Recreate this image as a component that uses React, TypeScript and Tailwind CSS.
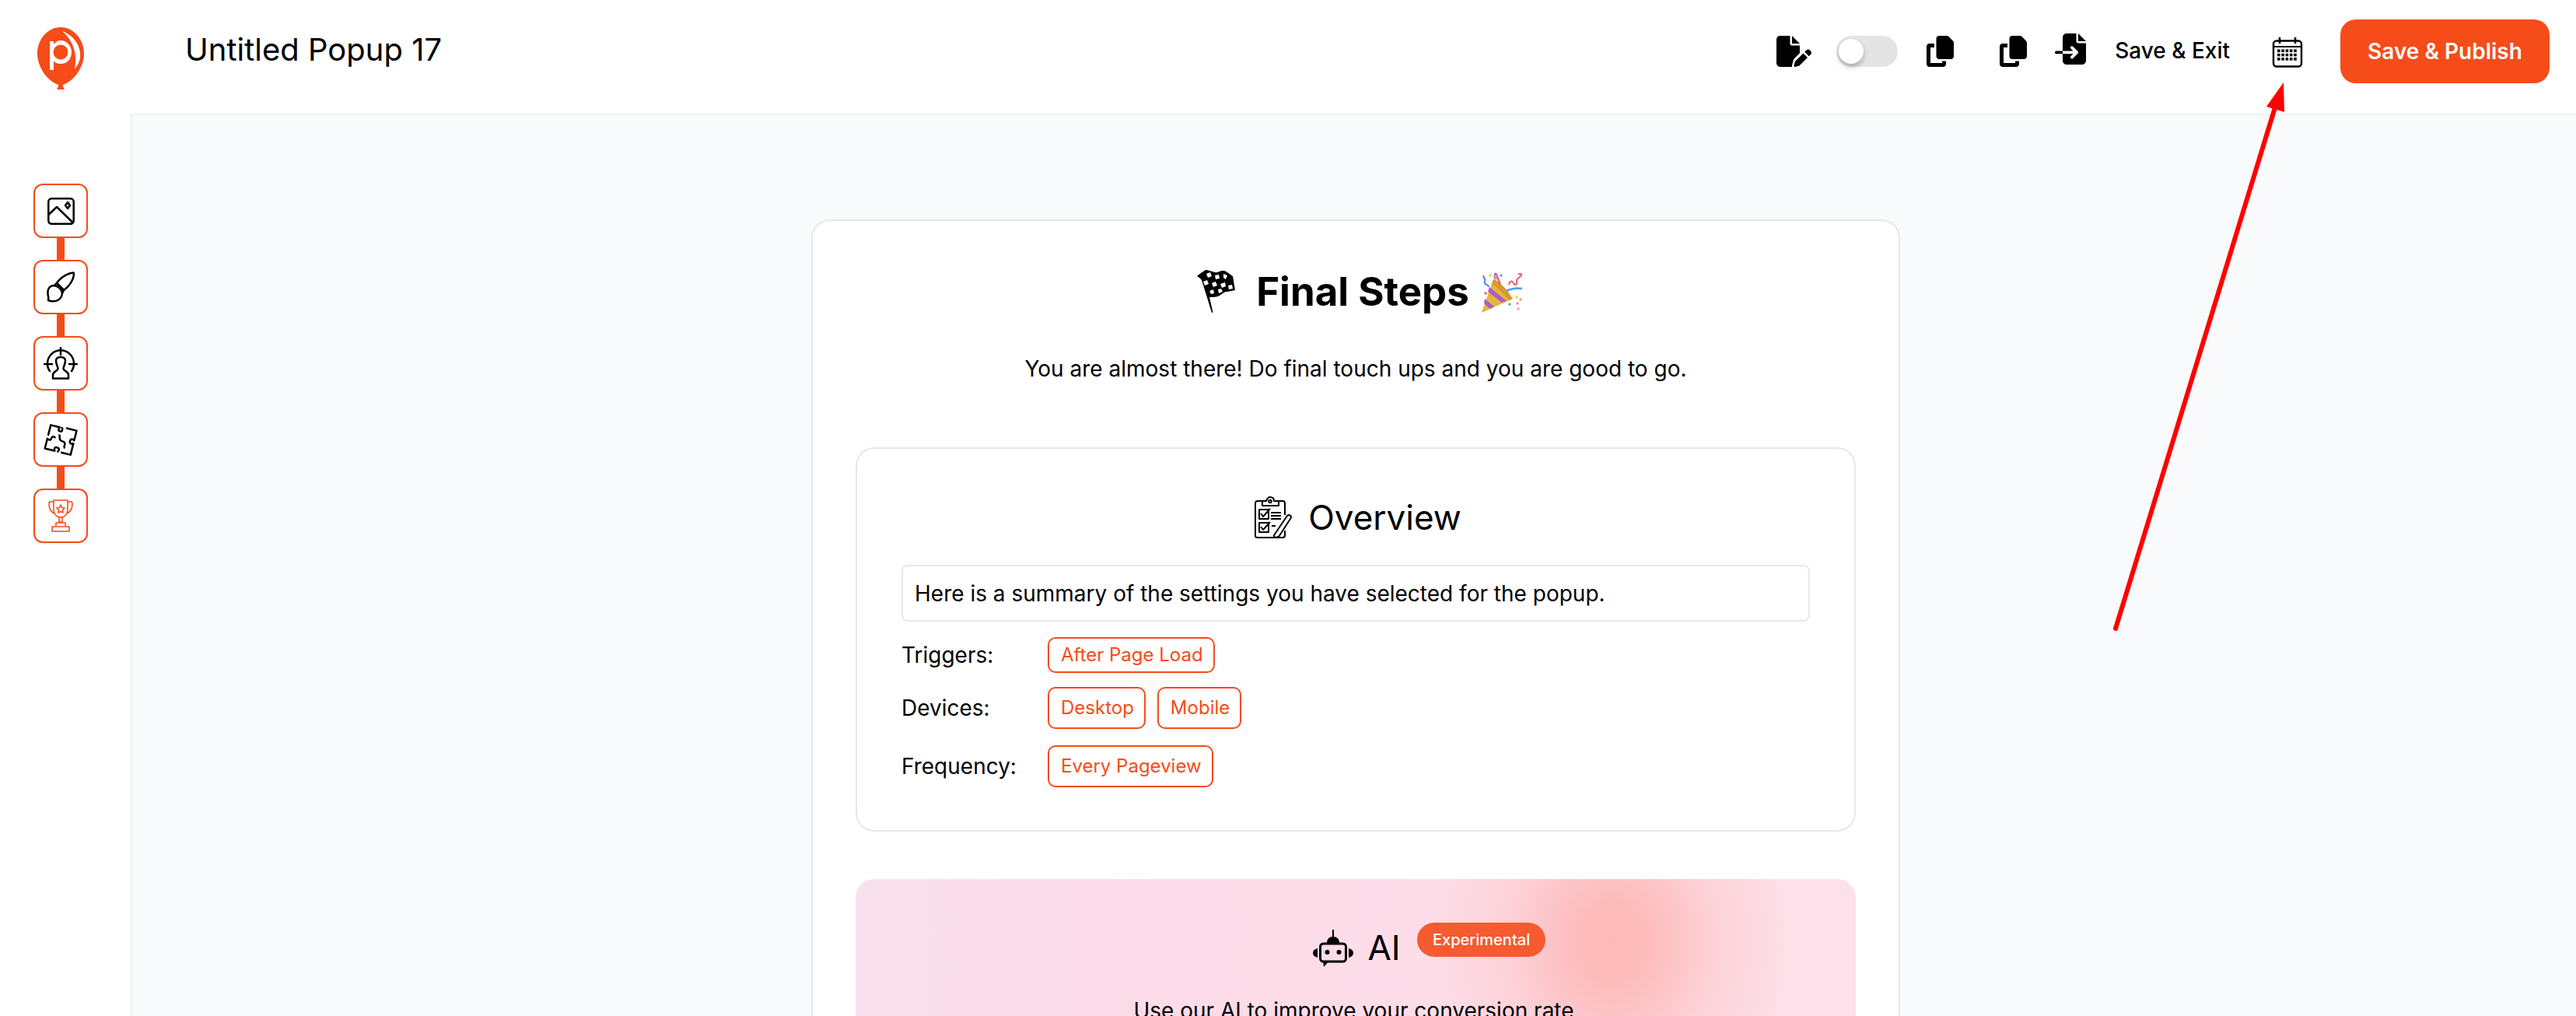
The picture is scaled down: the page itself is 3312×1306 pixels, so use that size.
import React from 'react';
import { FaCopy, FaFileImport, FaFilePen } from 'react-icons/fa6';

const FONT = "font-['Inter',sans-serif]";

function Logo() {
  return (
    <svg width="60" height="80" viewBox="0 0 60 80">
      <path d="M30 0C47 0 60 16 60 34C60 52 46 70 33 74L33 76L35 80L25 80L27 76L27 74C14 70 0 52 0 34C0 16 13 0 30 0Z" fill="#f54c19" />
      <path d="M16 55V18H21V22C23 19 26 17 30 17C38 17 44 24 44 32C44 41 38 47 30 47C26 47 23 46 21 43V55Z" fill="#fff" />
      <circle cx="30" cy="32" r="9.5" fill="#f54c19" />
      <path d="M32 5C44 9 57 22 55 40C54 45 51 50 48 54C52 36 47 18 32 5Z" fill="#fff" />
    </svg>
  );
}

function CalendarIcon() {
  const cells = [];
  for (let r = 0; r < 3; r++) {
    for (let c = 0; c < 5; c++) {
      cells.push(<rect key={`${r}-${c}`} x={7 + c * 5.3} y={16.5 + r * 5.3} width="3.6" height="3.6" fill="#000" />);
    }
  }
  return (
    <svg width="40" height="40" viewBox="0 0 40 40" fill="none">
      <rect x="2" y="5.5" width="36" height="33" rx="4" stroke="#000" strokeWidth="2.4" />
      <path d="M3 13H37" stroke="#000" strokeWidth="2" />
      <path d="M10 1V9M30 1V9" stroke="#000" strokeWidth="2.6" />
      {cells}
    </svg>
  );
}

function ImageIcon() {
  return (
    <svg width="35" height="35" viewBox="0 0 35 35" fill="none" stroke="#000" strokeWidth="2.5" strokeLinejoin="round" strokeLinecap="round">
      <rect x="1.3" y="1.3" width="32.4" height="32.4" rx="4" />
      <path d="M1.5 22L12 12L32.5 32" />
      <path d="M26 6L29 10L26 14L23 10Z" />
    </svg>
  );
}

function BrushIcon() {
  return (
    <svg width="36" height="40" viewBox="0 0 36 40" fill="none" stroke="#000" strokeWidth="2.5" strokeLinejoin="round" strokeLinecap="round">
      <path d="M13 15C17 8 27 2 34.5 1.5C36 6 32 17 22 24Z" />
      <path d="M10 18L13 15L22 24L20 28" />
      <path d="M10 18C4 18 1 22 1.5 28C1.5 32 3 33 2 37C9 40 19 38 20 28C19 23 15 19 10 18Z" />
    </svg>
  );
}

function TargetIcon() {
  return (
    <svg width="44" height="42" viewBox="0 0 44 42" fill="none" stroke="#000" strokeWidth="2.5" strokeLinecap="round" strokeLinejoin="round">
      <path d="M22 1V10M1 22H11M33 22H43" />
      <path d="M8 31A17 17 0 1 1 36 31" />
      <path d="M16 18C16 14 19 13 22 13C25 13 28 14 28 18C28 22 25.5 25 25.5 28C25.5 31 32 31 32 36V40.5H12V36C12 31 18.5 31 18.5 28C18.5 25 16 22 16 18Z" />
    </svg>
  );
}

function PuzzleIcon() {
  return (
    <svg width="44" height="43" viewBox="0 0 44 43" fill="none" stroke="#000" strokeWidth="2.5" strokeLinecap="round" strokeLinejoin="round">
      <g transform="rotate(14 22 21.5)">
        <path d="M5 19V6H17C15 9 16 11 19 11C21 11 22 9 20 6" />
        <path d="M26 5H39V18C36 16 34 17 34 20C34 23 36 24 39 22V37H27" />
        <path d="M22 37C24 34 23 32 20 32C17 32 16 34 18 37H5V24C8 26 10 25 10 22C10 20 12 19 14 20" />
        <path d="M19 16C21 19 19 20 22 22C25 24 26 21 28 24C30 27 27 28 29 30" />
      </g>
    </svg>
  );
}

function TrophyIcon() {
  return (
    <svg width="32" height="42" viewBox="0 0 32 42" fill="none" stroke="#f54c19" strokeWidth="1.6" strokeLinejoin="round">
      <path d="M7 1H25V13C25 19 21 23 16 23C11 23 7 19 7 13Z" />
      <path d="M7 3H1.5C0 10 3 16 8 18M25 3H30.5C32 10 29 16 24 18" />
      <path d="M16 7L17.5 10.5L21 11L18.5 13.5L19 17L16 15.5L13 17L13.5 13.5L11 11L14.5 10.5Z" />
      <path d="M14 23V29H18V23" />
      <path d="M10 34V30H22V34" />
      <rect x="5" y="35" width="22" height="6" />
    </svg>
  );
}

function FlagIcon() {
  return (
    <svg width="52" height="58" viewBox="8 6 52 58">
      <path d="M15 20L28 62L29.5 61.5L25 42C30 42 34 42 38 40C42 37 44 35 48 35L58 33L55 15C50 12 47 8 43 8C38 8 36 11 32 10C27 9 24 7 20 7C16 10 12 12 9 15L12 17Z" fill="#000" />
      <path d="M21 12L26 10L28 15L23 17ZM32 14L37 13L38 18L33 19ZM43 12L48 14L46 19L43 17ZM17 22L22 20L24 25L19 27ZM28 24L33 22L35 27L30 29ZM39 25L45 23L46 28L41 30ZM25 34L30 32L31 37L27 38ZM36 32L40 31L42 35L37 37ZM49 27L54 26L55 31L50 32Z" fill="#fff" />
    </svg>
  );
}

function PartyIcon() {
  return (
    <svg width="56" height="54" viewBox="4 6 56 54">
      <path d="M20 17L45 42L5 60Z" fill="#e8b33f" />
      <path d="M20 17C24 17 36 27 45 42L40 44C32 34 24 26 18 24Z" fill="#d89a2c" />
      <path d="M15 27L37 45L31 47L13 33ZM9 42L21 52L16 55L8 48Z" fill="#a65fc4" />
      <path d="M24 17C22 14 20 12 23 9M8 12C5 14 11 16 9 20C7 24 14 23 14 27" fill="none" stroke="#4a86e8" strokeWidth="2" />
      <path d="M23 9C26 14 27 20 29 24" fill="none" stroke="#e85a7a" strokeWidth="2.4" />
      <path d="M37 32C43 29 50 28 57 29" fill="none" stroke="#4a9ff0" strokeWidth="2.6" />
      <path d="M40 24C41 19 44 18 46 22C48 26 51 24 50 20C49 16 54 15 56 12C57 10 54 9 52 11" fill="none" stroke="#e85a7a" strokeWidth="2" />
      <circle cx="16" cy="12" r="1.8" fill="#f0d040" />
      <circle cx="22" cy="15" r="1.8" fill="#ee88a8" />
      <circle cx="30" cy="12" r="1.6" fill="#4a86e8" />
      <circle cx="10" cy="35" r="1.8" fill="#e85a7a" />
      <circle cx="50" cy="40" r="1.8" fill="#f0d040" />
      <circle cx="55" cy="43" r="1.8" fill="#f0a060" />
      <circle cx="41" cy="49" r="1.6" fill="#4a86e8" />
      <circle cx="51" cy="48" r="1.8" fill="#f0a060" />
      <circle cx="52" cy="55" r="1.6" fill="#ee88a8" />
    </svg>
  );
}

function ClipboardIcon() {
  return (
    <svg width="48" height="54" viewBox="0 0 48 54" fill="none" stroke="#000" strokeWidth="2" strokeLinejoin="round">
      <path d="M10 6H4C2 6 1 7 1 9V51C1 52 2 53 4 53H36C38 53 39 52 39 50V44M39 24V9C39 7 38 6 36 6H31" />
      <path d="M10 12V6H15C16 3 18 1 20 1C23 1 25 3 25 6H31V12Z" />
      <circle cx="20" cy="6.5" r="1.8" />
      <rect x="6" y="17" width="12" height="12" />
      <path d="M8 22L11 26L20 16" />
      <path d="M21 21H34M21 25H34M21 29H34" />
      <rect x="6" y="34" width="12" height="12" />
      <path d="M8 39L11 43L20 33" />
      <path d="M22 38H27" />
      <path d="M25 50L42 25C43 23 46 24 47 26C47 27 47 28 46 29L31 52L25 53Z" />
    </svg>
  );
}

function RobotIcon() {
  return (
    <svg width="52" height="48" viewBox="0 0 52 48">
      <path d="M25 0H27V9H25Z" fill="#000" />
      <path d="M18 17C18 12 21 9 26 9C31 9 34 12 34 17Z" fill="#000" />
      <rect x="9.5" y="18" width="33" height="23" rx="4" fill="none" stroke="#000" strokeWidth="3" />
      <path d="M6 24V36C2 35 0 33 0 30C0 27 2 25 6 24ZM46 24V36C50 35 52 33 52 30C52 27 50 25 46 24Z" fill="#000" />
      <circle cx="18.5" cy="29" r="3" fill="#000" />
      <circle cx="33.5" cy="29" r="3" fill="#000" />
      <path d="M13 40H21L14 48Z" fill="#000" />
    </svg>
  );
}

const steps = [
  <ImageIcon key="image" />,
  <BrushIcon key="brush" />,
  <TargetIcon key="target" />,
  <PuzzleIcon key="puzzle" />,
  <TrophyIcon key="trophy" />,
];

function Chip({ label, tall }: { label: string; tall?: boolean }) {
  return (
    <span className={`flex items-center rounded-[10px] border-2 border-[#f54c19] pl-[15px] pr-[13px] text-[24px] text-[#f54c19] ${tall ? 'h-[54px]' : 'h-[46px]'}`}>
      {label}
    </span>
  );
}

function SummaryRow({ label, children, className }: { label: string; children: React.ReactNode; className: string }) {
  return (
    <div className={`flex items-center ${className}`}>
      <span className="w-[188px] text-[28px]">{label}</span>
      <div className="flex gap-[15px]">{children}</div>
    </div>
  );
}

export default function App() {
  return (
    <div className={`relative flex h-[1306px] w-[3312px] flex-col overflow-hidden bg-white text-black ${FONT}`}>
      <header className="flex h-[146px] shrink-0 items-center">
        <div className="mb-[-4px] ml-[48px] w-[190px]">
          <Logo />
        </div>
        <h1 className="mb-[18px] text-[40px]">Untitled Popup 17</h1>
        <div className="ml-auto flex items-center">
          <FaFilePen className="mb-[14px] h-[40px] w-[45px]" />
          <div className="mb-[14px] ml-[32px] flex h-[40px] w-[79px] items-center rounded-full bg-[#e4e4e4] pl-[3px]">
            <div className="h-[32px] w-[32px] rounded-full bg-white shadow-[0_4px_6px_rgba(0,0,0,0.25)]" />
          </div>
          <FaCopy className="mb-[14px] ml-[37px] h-[40px] w-[35px]" />
          <FaCopy className="mb-[14px] ml-[59px] h-[40px] w-[35px]" />
          <FaFileImport className="mb-[20px] ml-[36px] h-[40px] w-[40px]" />
          <span className="mb-[16px] ml-[37px] text-[28px] font-medium">Save &amp; Exit</span>
          <div className="mb-[13px] ml-[54px]">
            <CalendarIcon />
          </div>
          <button className="mb-[14px] ml-[48px] mr-[34px] flex h-[82px] w-[269px] items-center justify-center rounded-[20px] bg-[#f54c19] text-[28px] font-semibold text-white">
            Save &amp; Publish
          </button>
        </div>
      </header>

      <div className="flex min-h-0 flex-1">
        <aside className="flex w-[168px] shrink-0 flex-col items-center pt-[90px]">
          <div className="ml-[-12px] flex flex-col items-center">
            {steps.map((icon, i) => (
              <React.Fragment key={i}>
                {i > 0 && <div className="h-[28px] w-[10px] bg-[#f54c19]" />}
                <div className="flex h-[70px] w-[70px] items-center justify-center rounded-[12px] border-2 border-[#f54c19] bg-white">
                  {icon}
                </div>
              </React.Fragment>
            ))}
          </div>
        </aside>

        <main className="flex flex-1 justify-center border-t-2 border-l-2 border-[#eef0f2] bg-[#f9fafc] pl-[4px] pt-[134px]">
          <div className="h-[1200px] w-[1400px] shrink-0 rounded-[24px] border-2 border-[#e5e7eb] bg-white px-[55px]">
            <div className="mt-[62px] flex items-center justify-center pl-[12px]">
              <FlagIcon />
              <h2 className="ml-[25px] text-[51px] font-bold leading-[58px]">Final Steps</h2>
              <div className="ml-[15px]">
                <PartyIcon />
              </div>
            </div>
            <p className="mt-[50px] text-center text-[28px] leading-[40px]">You are almost there! Do final touch ups and you are good to go.</p>

            <section className="mt-[81px] h-[494px] rounded-[24px] border-2 border-[#e5e7eb] px-[57px] pt-[61px]">
              <div className="flex items-center justify-center pl-[6px]">
                <ClipboardIcon />
                <h3 className="ml-[21px] text-[44px] leading-[54px]">Overview</h3>
              </div>
              <div className="mt-[34px] flex h-[73px] items-center rounded-[8px] border-2 border-[#e5e7eb] px-[15px] text-[28px]">
                Here is a summary of the settings you have selected for the popup.
              </div>
              <SummaryRow label="Triggers:" className="mt-[20px]">
                <Chip label="After Page Load" />
              </SummaryRow>
              <SummaryRow label="Devices:" className="mt-[18px]">
                <Chip label="Desktop" tall />
                <Chip label="Mobile" tall />
              </SummaryRow>
              <SummaryRow label="Frequency:" className="mt-[21px]">
                <Chip label="Every Pageview" tall />
              </SummaryRow>
            </section>

            <section className="relative mt-[61px] h-[600px] overflow-hidden rounded-[24px] bg-gradient-to-r from-[#f8e1ec] via-[#fddbe8] via-30% to-[#fde1ea]">
              <div className="absolute left-[742px] top-[-190px] h-[540px] w-[460px] bg-[radial-gradient(closest-side,#fdb9b9_0%,#fdbcbc_20%,rgba(253,205,210,0.7)_60%,transparent_100%)]" />
              <div className="relative flex items-start justify-center pl-[3px]">
                <div className="mt-[65px]">
                  <RobotIcon />
                </div>
                <span className="ml-[18px] mt-[61px] text-[44px] leading-[54px]">AI</span>
              </div>
              <span className="absolute left-[722px] top-[56px] flex h-[44px] items-center rounded-full bg-[#f55a30] px-[20px] text-[20px] font-medium text-white">
                Experimental
              </span>
              <p className="relative mt-[34px] pr-[5px] text-center text-[28px] leading-[40px]">Use our AI to improve your conversion rate</p>
            </section>
          </div>
        </main>
      </div>

      {/* annotation arrow */}
      <svg className="pointer-events-none absolute left-0 top-0" width="3312" height="1306">
        <path d="M2720 808L2926 135" stroke="#ff0000" strokeWidth="6" strokeLinecap="round" />
        <path d="M2936 106L2914 137L2937 144Z" fill="#ff0000" />
      </svg>
    </div>
  );
}
